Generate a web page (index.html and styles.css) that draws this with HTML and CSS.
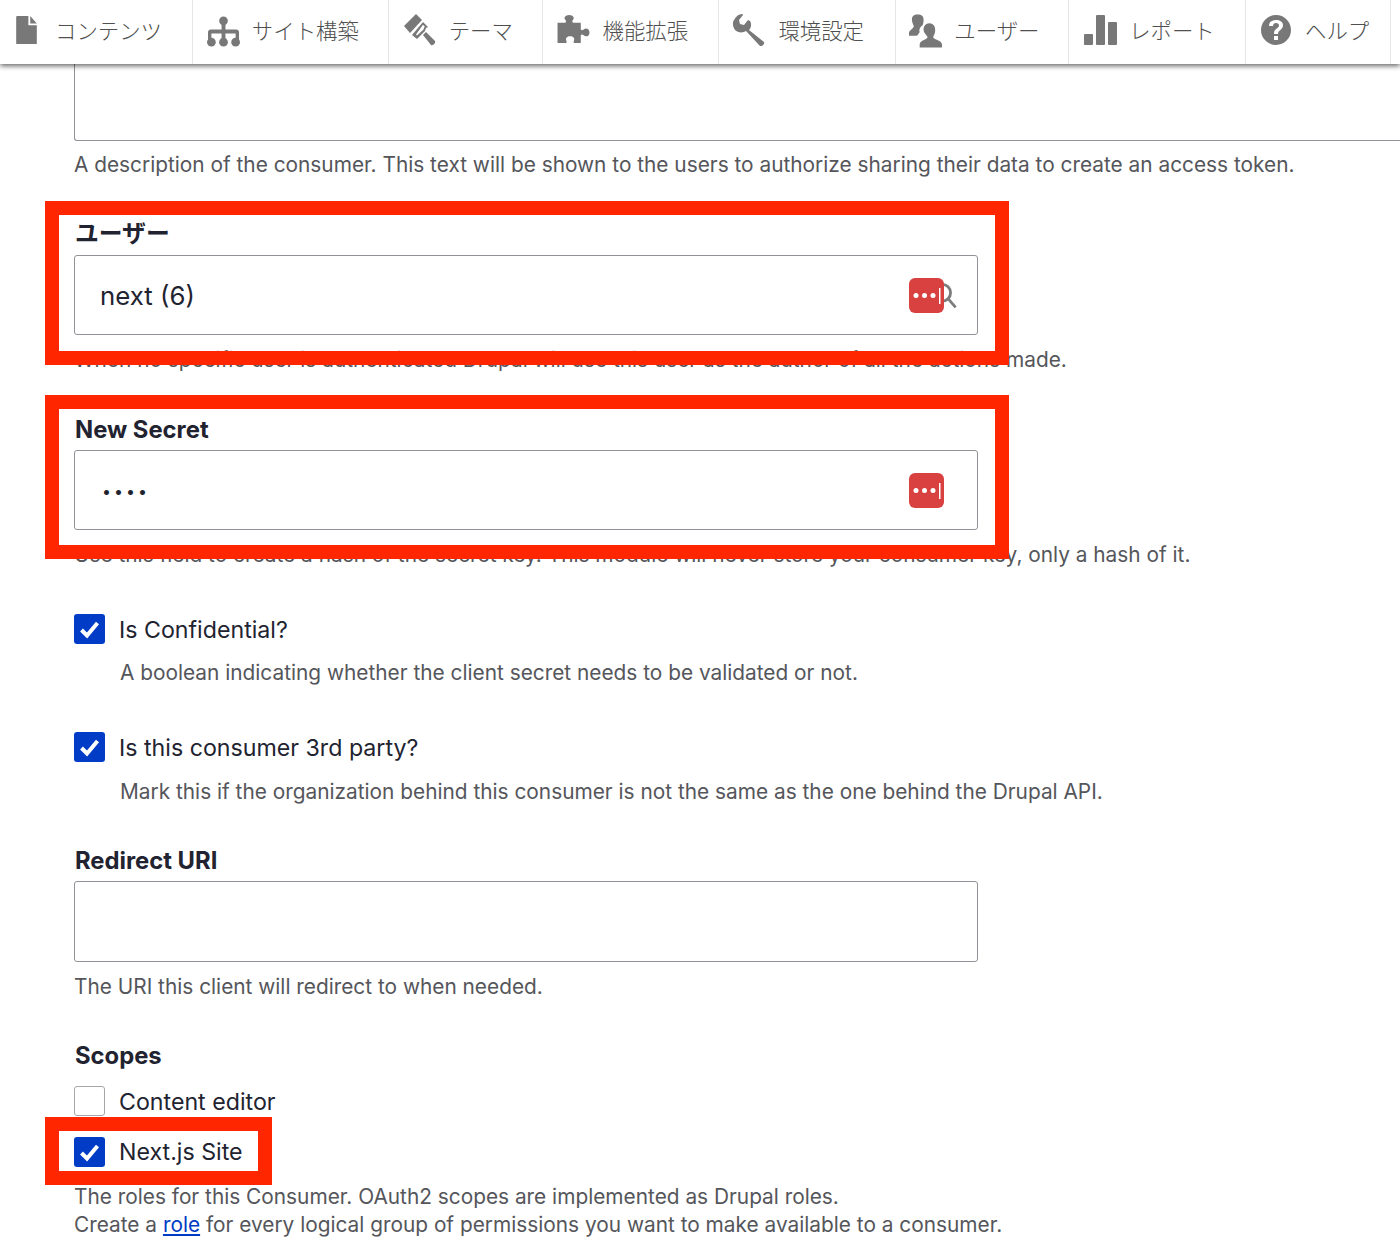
FILE: index.html
```html
<!DOCTYPE html>
<html lang="ja">
<head>
<meta charset="utf-8">
<title>Consumer</title>
<link rel="stylesheet" href="styles.css">
</head>
<body>
<nav class="toolbar">
  <a class="tab tab-content"><svg class="ico" viewBox="0 0 24 32"><path d="M2 1h12v10h9v19a1 1 0 0 1-1 1H2a1 1 0 0 1-1-1V2a1 1 0 0 1 1-1zM16 1l7 8h-7z"/></svg>コンテンツ</a>
  <a class="tab tab-site"><svg class="ico" viewBox="0 0 34 32"><circle cx="17" cy="5" r="4.500"/><circle cx="4.500" cy="27" r="4.500"/><circle cx="17" cy="27" r="4.500"/><circle cx="29.500" cy="27" r="4.500"/><path d="M15 8h4v6h11a3 3 0 0 1 3 3v8h-3.500v-7H19v7h-4v-7H4.500v7H1v-8a3 3 0 0 1 3-3h11z"/></svg>サイト構築</a>
  <a class="tab tab-theme"><svg class="ico" viewBox="0 0 32 32"><path d="M0 12L12 0l6 6L6 19z"/><path fill-rule="evenodd" d="M8 21L19 8l5 5-2 1-1 3-8 8zM12 20.500l1 1 6.500-6 .8-2.500.7-.3-2-2z"/><path d="M19 21l3-3 9 9c1 2-2 5-4 4z"/></svg>テーマ</a>
  <a class="tab tab-ext"><svg class="ico" viewBox="0 0 34 32"><path d="M0 9h8c1-1 1-2 0-3-2-2 0-5 4-5s6 3 4 5c-1 1-1 2 0 3h8v7c1 1 2 1 3 0 2-2 6-1 6 3s-4 5-6 3c-1-1-2-1-3 0v8h-7c-1-1 0-2 0-3 1-2-1-4-4-4s-5 2-4 4c0 1 1 2 0 3H0z"/></svg>機能拡張</a>
  <a class="tab tab-conf"><svg class="ico" viewBox="0 0 32 32"><path d="M9 0c1 0 1 1 1 1L6 6l1 4 4 1 4-5 2 1c2 3 1 7-1 9l15 12c1 2-2 5-4 4L13 17c-3 2-8 2-11-1C0 13-1 9 1 6 3 2 6 0 9 0z"/></svg>環境設定</a>
  <a class="tab tab-user"><svg class="ico" viewBox="0 0 34 34"><path d="M9 0c4 0 6 2 6 5 0 2 0 4-1 6-3 2-4 5-3 7-1 2-2 3-3 4H0v-3c0-3 4-4 5-7-1-2-2-4-2-7 0-3 2-5 6-5z"/><path d="M21 9c4 0 6 3 6 7 0 3-1 5-2 7-1 3 9 3 9 8v3H11v-3c0-5 9-5 8-8-1-2-4-4-4-7 0-4 2-7 6-7z"/></svg>ユーザー</a>
  <a class="tab tab-report"><svg class="ico" viewBox="0 0 34 30"><rect x="0" y="19" width="9" height="11" rx="1"/><rect x="12" y="0" width="9" height="30" rx="1"/><rect x="24" y="7" width="9" height="23" rx="1"/></svg>レポート</a>
  <a class="tab tab-help"><svg class="ico" viewBox="0 0 30 30"><path fill-rule="evenodd" d="M15 0a15 15 0 1 1 0 30 15 15 0 0 1 0-30zM13 21v4h4v-4zM15 5c-4 0-7 2-7 6h4c0-2 1-3 3-3s3 1 3 2.500c0 3-5 3-5 8v.5h4c0-4 5-4 5-9 0-3-3-5-7-5z"/></svg>ヘルプ</a>
</nav>

<main class="form">
  <div class="field field-desc">
    <div class="textarea-top"></div>
    <p class="help">A description of the consumer. This text will be shown to the users to authorize sharing their data to create an access token.</p>
  </div>

  <div class="field field-user">
    <label class="label">ユーザー</label>
    <div class="input-wrap">
      <input class="input" type="text" value="next (6)">
      <svg class="search" viewBox="0 0 24 24"><circle cx="9" cy="10" r="7.500"/><path d="M14 15l7 8"/></svg>
      <svg class="pm" viewBox="0 0 35 35"><rect width="35" height="35" rx="6"/><circle cx="7" cy="17.500" r="2.500" class="pm-w"/><circle cx="15.500" cy="17.500" r="2.500" class="pm-w"/><circle cx="24" cy="17.500" r="2.500" class="pm-w"/><rect x="30" y="10" width="1.500" height="16" class="pm-w"/></svg>
    </div>
    <p class="help">When no specific user is authenticated Drupal will use this user as the author of all the actions made.</p>
  </div>

  <div class="field field-secret">
    <label class="label">New Secret</label>
    <div class="input-wrap">
      <div class="input input-pass">••••</div>
      <svg class="pm" viewBox="0 0 35 35"><rect width="35" height="35" rx="6"/><circle cx="7" cy="17.500" r="2.500" class="pm-w"/><circle cx="15.500" cy="17.500" r="2.500" class="pm-w"/><circle cx="24" cy="17.500" r="2.500" class="pm-w"/><rect x="30" y="10" width="1.500" height="16" class="pm-w"/></svg>
    </div>
    <p class="help">Use this field to create a hash of the secret key. This module will never store your consumer key, only a hash of it.</p>
  </div>

  <div class="check-field check-conf">
    <div class="check-row"><span class="box on"><svg viewBox="0 0 30 30"><path d="M7 16l5.500 5.500L23 9"/></svg></span><span class="check-label">Is Confidential?</span></div>
    <p class="help help-indent">A boolean indicating whether the client secret needs to be validated or not.</p>
  </div>

  <div class="check-field check-third">
    <div class="check-row"><span class="box on"><svg viewBox="0 0 30 30"><path d="M7 16l5.500 5.500L23 9"/></svg></span><span class="check-label">Is this consumer 3rd party?</span></div>
    <p class="help help-indent">Mark this if the organization behind this consumer is not the same as the one behind the Drupal API.</p>
  </div>

  <div class="field field-uri">
    <label class="label">Redirect URI</label>
    <input class="input" type="text">
    <p class="help">The URI this client will redirect to when needed.</p>
  </div>

  <div class="field field-scopes">
    <label class="label">Scopes</label>
    <div class="check-row scope-first"><span class="box"></span><span class="check-label">Content editor</span></div>
    <div class="check-row scope-second"><span class="box on"><svg viewBox="0 0 30 30"><path d="M7 16l5.500 5.500L23 9"/></svg></span><span class="check-label">Next.js Site</span></div>
    <p class="help help-scopes">The roles for this Consumer. OAuth2 scopes are implemented as Drupal roles.<br>Create a <a href="#" class="link">role</a> for every logical group of permissions you want to make available to a consumer.</p>
  </div>
</main>

<div class="mark mark-user"></div>
<div class="mark mark-secret"></div>
<div class="mark mark-scope"></div>
</body>
</html>
```
FILE: styles.css
```css
* { box-sizing: border-box; }
html, body { margin: 0; padding: 0; height: 1259px; overflow: hidden; background: #fff; }
body { position: relative; font-family: Inter, "Noto Sans CJK JP", sans-serif; color: #222330; }

.toolbar { position: relative; z-index: 2; display: flex; height: 64px; background: #fff; box-shadow: 0 2px 5px rgba(0,0,0,.6); padding-right: 9px; }
.tab { display: flex; align-items: center; gap: 14px; height: 64px; padding: 0 28px 5px 14px; border-right: 1px solid #e6e6e6; font-family: "Noto Sans CJK JP", sans-serif; font-size: 21.400px; font-weight: 300; color: #4f4f4f; white-space: nowrap; }
.ico { display: block; fill: #787878; flex: none; }
.tab-content { width: 193px; gap: 17px; padding-left: 15px; }
.tab-content .ico { width: 23px; height: 30px; }
.tab-site { width: 196px; gap: 12px; }
.tab-site .ico { width: 33px; height: 31px; margin-top: 4px; }
.tab-theme { width: 154px; gap: 13px; padding-left: 15px; }
.tab-theme .ico { width: 32px; height: 32px; }
.tab-ext { width: 177px; gap: 12px; }
.tab-ext .ico { width: 34px; height: 31px; }
.tab-conf { width: 177px; gap: 13px; }
.tab-conf .ico { width: 32px; height: 32px; }
.tab-user { width: 173px; gap: 12px; padding-left: 13px; }
.tab-user .ico { width: 33px; height: 34px; margin-top: 3px; }
.tab-report { width: 177px; gap: 11px; padding-left: 15px; }
.tab-report .ico { width: 34px; height: 30px; }
.tab-help { width: 145px; gap: 14px; padding-left: 15px; }
.tab-help .ico { width: 30px; height: 30px; }

.form { padding-left: 74px; }
.field, .check-field { display: block; }
.textarea-top { height: 77px; border: 1px solid #919297; border-width: 0 0 1px 1px; border-radius: 0 0 0 3px; }
.help { margin: 0; font-size: 20.830px; line-height: 28px; color: #55565b; white-space: nowrap; }
.field-desc .help { margin-top: 10px; }
.label { display: block; padding-left: 1px; font-size: 23.800px; font-weight: 700; line-height: 28px; color: #222330; }
.input-wrap { position: relative; width: 904px; }
.input { display: block; width: 904px; height: 80px; padding: 1px 25px 0; border: 1px solid #919297; border-radius: 3px; background: #fff; font-family: Inter, sans-serif; font-size: 25.800px; color: #222330; outline: 0; }
.input-pass { display: flex; align-items: center; padding-left: 27px; letter-spacing: 3px; font-size: 16px; }

.field-user { margin-top: 40px; }
.field-user .label { padding-top: 1px; line-height: 27px; }
.field-user .input-wrap { margin-top: 8px; }
.field-user .help { margin-top: 11px; }
.field-secret { margin-top: 42px; }
.field-secret .input-wrap { margin-top: 6px; }
.field-secret .help { margin-top: 11px; }
.pm { position: absolute; left: 835px; top: 23px; width: 35px; height: 35px; fill: #d8413f; }
.pm .pm-w { fill: #fff; }
.search { position: absolute; left: 858px; top: 26px; width: 27px; height: 28px; fill: none; stroke: #7c7c7c; stroke-width: 2.500; }

.check-row { display: flex; align-items: center; gap: 14px; height: 30px; }
.box { display: flex; width: 31px; height: 30px; border: 1.500px solid #a5a6aa; border-radius: 3px; background: #fff; flex: none; }
.box.on { background: #003cc5; border: 0; }
.box svg { display: block; width: 100%; height: 100%; fill: none; stroke: #fff; stroke-width: 4; }
.check-label { font-size: 23.200px; line-height: 30px; color: #222330; }
.check-field .check-label, .scope-first .check-label { margin-top: 2px; }
.help-indent { margin: 15px 0 0 46px; }
.check-conf { margin-top: 45px; }
.check-third { margin-top: 45px; }
.check-third .help-indent { margin-top: 16px; }
.field-uri { margin-top: 41px; }
.field-uri .input { margin-top: 6px; height: 81px; }
.field-uri .help { margin-top: 11px; }
.field-scopes { margin-top: 41px; }
.scope-first { margin-top: 16px; }
.scope-second { margin-top: 21px; }
.help-scopes { margin-top: 16px; }
.link { color: #003cc5; text-decoration: underline; }

.mark { position: absolute; z-index: 1; border: 14px solid #ff2600; }
.mark-user { left: 45px; top: 201px; width: 964px; height: 164px; }
.mark-secret { left: 45px; top: 395px; width: 964px; height: 164px; }
.mark-scope { left: 45px; top: 1117px; width: 227px; height: 68px; }
```
